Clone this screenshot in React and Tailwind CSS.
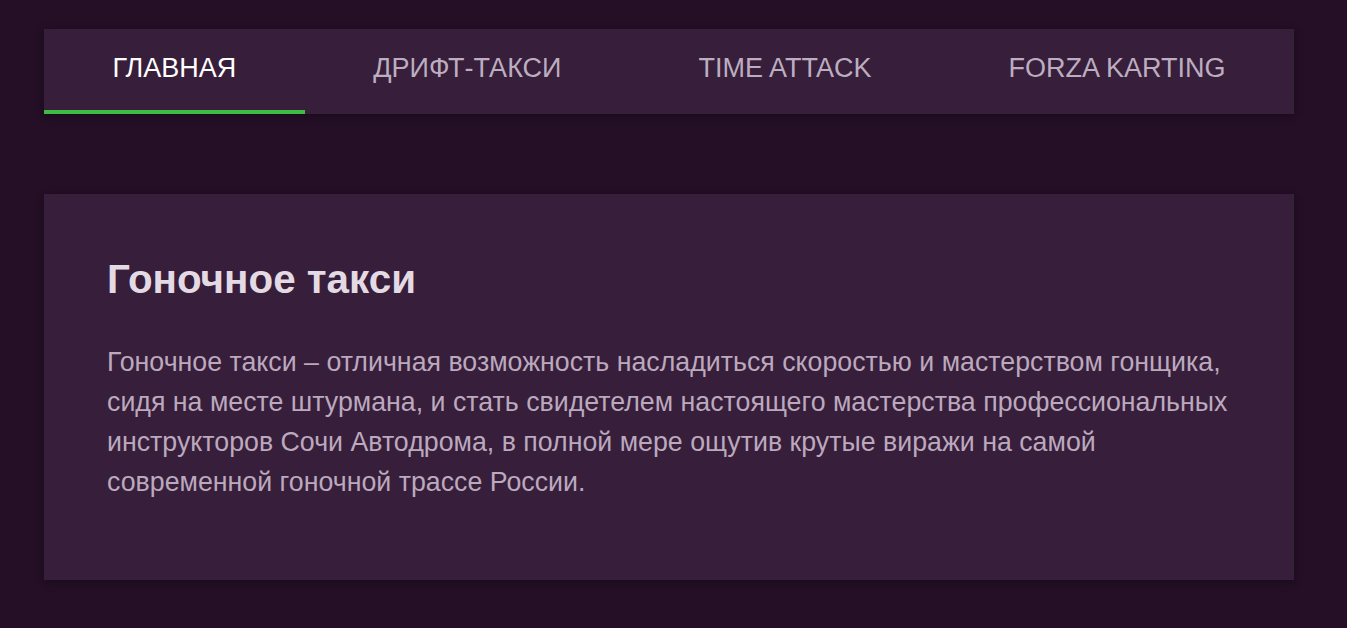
const TABS = ['ГЛАВНАЯ', 'ДРИФТ-ТАКСИ', 'TIME ATTACK', 'FORZA KARTING']

export default function App() {
  const active = 0

  return (
    <div className="min-h-[628px] bg-[#240f26] pl-[44px] pr-[53px] pt-[29px] pb-[48px] font-['Liberation_Sans',Arial,sans-serif]">
      {/* Tabs */}
      <nav className="flex bg-[#371e3a] shadow-[0_2px_8px_rgba(0,0,0,0.35)]">
        {TABS.map((t, i) => (
          <div
            key={t}
            className={`flex-auto text-center pt-[24px] pb-[26px] text-[27px] leading-[31px] border-b-4 ${
              i === active ? 'text-white border-[#3fba43]' : 'text-[#bcaec0] border-transparent'
            }`}
          >
            {t}
          </div>
        ))}
      </nav>

      {/* Card */}
      <section className="mt-[80px] bg-[#371e3a] pl-[63px] pr-[47px] pt-[63px] pb-[78px] shadow-[0_2px_8px_rgba(0,0,0,0.35)]">
        <h1 className="text-[40.4px] leading-[44px] font-bold text-[#e3dae4]">Гоночное такси</h1>
        <p className="mt-[41px] text-[26.75px] leading-[40px] text-[#bba9be]">
          Гоночное такси – отличная возможность насладиться скоростью и мастерством гонщика, сидя на месте штурмана, и стать свидетелем настоящего мастерства профессиональных инструкторов Сочи Автодрома, в полной мере ощутив крутые виражи на самой современной гоночной трассе России.
        </p>
      </section>
    </div>
  )
}
